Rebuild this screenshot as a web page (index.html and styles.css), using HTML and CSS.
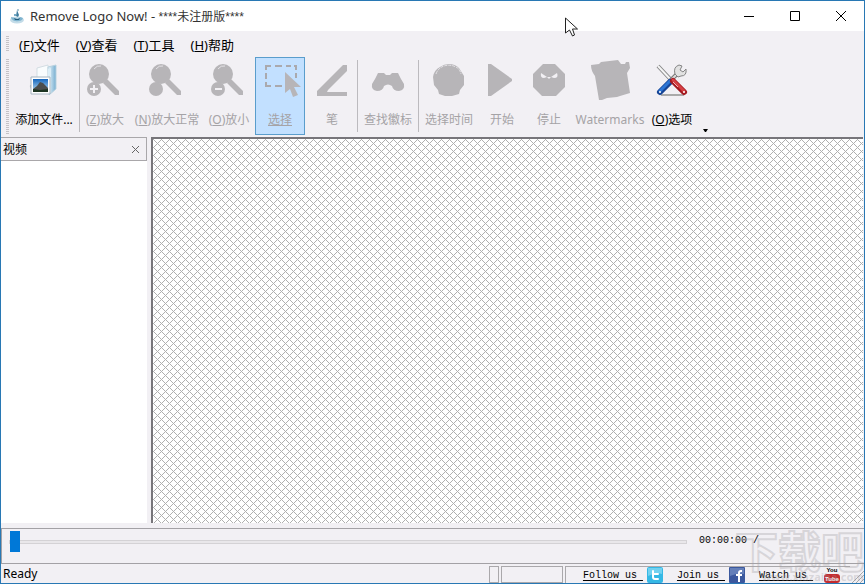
FILE: index.html
```html
<!DOCTYPE html>
<html lang="zh-CN">
  <head>
    <meta charset="UTF-8" />
    <meta name="viewport" content="width=device-width, initial-scale=1.0" />
    <title>Remove Logo Now!</title>
    <link rel="stylesheet" href="styles.css">
  </head>
  <body>
    <div class="window">
      <header class="titlebar">
        <svg class="app-icon" width="16" height="16" viewBox="0 0 16 16">
          <ellipse cx="8" cy="12" rx="7" ry="3.5" fill="#c3dce8" />
          <path d="M2 9c0 5 11 6 12 1l-3-1-2 2-3-1z" fill="#7fb4cf" />
          <path d="M5 10q3 2 6 0l-1 2H6z" fill="#235b7c" />
          <path d="M7 8l1-6 2 5-1 2z" fill="#3e7d9f" />
          <circle cx="9" cy="2" r="1" fill="#8fb5c7" />
          <circle cx="6" cy="7" r="1" fill="#4c91b5" />
        </svg>
        <h1>Remove Logo Now! - <span class="edition">****未注册版****</span></h1>
        <div class="window-buttons">
          <button aria-label="Minimize">
            <svg width="12" height="12"><path d="M1 6.500h10" /></svg>
          </button>
          <button aria-label="Maximize">
            <svg width="12" height="12"><path d="M1.500 1.500h9v9h-9z" /></svg>
          </button>
          <button aria-label="Close">
            <svg width="12" height="12"><path d="M1 1l10 10M11 1L1 11" /></svg>
          </button>
        </div>
      </header>

      <nav class="menubar">
        <span class="grip"></span>
        <button>(<u>F</u>)文件</button>
        <button>(<u>V</u>)查看</button>
        <button>(<u>T</u>)工具</button>
        <button>(<u>H</u>)帮助</button>
      </nav>

      <div class="toolbar">
        <span class="grip"></span>
        <button class="tool file">
          <svg width="32" height="32" viewBox="0 0 32 32">
            <defs>
              <linearGradient id="folder" x1="0" x2="1">
                <stop offset="0" stop-color="#e9f5fb" />
                <stop offset="1" stop-color="#75add0" />
              </linearGradient>
              <linearGradient id="sky" x2="0" y2="1">
                <stop offset="0" stop-color="#1667bd" />
                <stop offset="1" stop-color="#c7e5f5" />
              </linearGradient>
            </defs>
            <path d="M9 4l11-3v19H9z" fill="#f9fcfd" stroke="#d3dde3" />
            <path d="M20 3l8-2v24l-7 6z" fill="url(#folder)" stroke="#b8d2df" />
            <path d="M20 5l3-1v24l-3 3z" fill="#dceef7" />
            <path d="M2 21q-1 4 4 5v-5z" fill="#b5b8bd" />
            <path d="M3 13h19v17H3z" fill="#fff" stroke="#a7b6c1" />
            <path d="M5 15h15v13H5z" fill="url(#sky)" />
            <path d="M5 25l4-3 3-4 3 1 5 5v3H5z" fill="#4b4d4c" />
            <path d="M5 25l7 1 8-1v3H5z" fill="#1d3522" />
          </svg>
          <span>添加文件...</span>
        </button>
        <span class="divider"></span>
        <button class="tool zoom" disabled>
          <svg width="32" height="32" viewBox="0 0 32 32">
            <circle cx="12" cy="10" r="10" />
            <circle cx="7" cy="25" r="7" />
            <path d="M16 19l4-4 12 12v4h-4z" />
            <path d="M6 21h2v3h3v2H8v3H6v-3H3v-2h3z" class="cut" />
            <path d="M7 5q3-4 7-3" class="shine" />
          </svg>
          <span>(<u>Z</u>)放大</span>
        </button>
        <button class="tool wide zoom" disabled>
          <svg width="32" height="32" viewBox="0 0 32 32">
            <circle cx="12" cy="10" r="10" />
            <circle cx="7" cy="25" r="7" />
            <path d="M16 19l4-4 12 12v4h-4z" />
            <path d="M7 5q3-4 7-3" class="shine" />
          </svg>
          <span>(<u>N</u>)放大正常</span>
        </button>
        <button class="tool zoom" disabled>
          <svg width="32" height="32" viewBox="0 0 32 32">
            <circle cx="12" cy="10" r="10" />
            <circle cx="7" cy="25" r="7" />
            <path d="M16 19l4-4 12 12v4h-4z" />
            <path d="M4 24h7v2H4z" class="cut" />
            <path d="M7 5q3-4 7-3" class="shine" />
          </svg>
          <span>(<u>O</u>)放小</span>
        </button>
        <button class="tool selected" disabled>
          <svg width="36" height="32" viewBox="0 0 36 32">
            <path d="M1 6V2h5M10 2h7M21 2h5M29 2h2v4M1 9v6M1 18v4h5M10 22h7M31 9v5" class="dash" />
            <path d="M20 8l16 15h-7l4 8-5 2-3-8-5 4z" />
          </svg>
          <span><u>选择</u></span>
        </button>
        <button class="tool" disabled>
          <svg width="32" height="32" viewBox="0 0 32 32">
            <path d="M27 1l4 0v6L12 26l-1 2h20v4H1v-5z" />
          </svg>
          <span>笔</span>
        </button>
        <span class="divider"></span>
        <button class="tool medium" disabled>
          <svg width="32" height="32" viewBox="0 0 32 32">
            <path d="M6 9h6l2 2h4l2-2h6l3 6 3 5q1 6-5 7-6 0-7-5-4-3-8 0-1 5-7 5-6-1-5-7l3-5z" />
          </svg>
          <span>查找徽标</span>
        </button>
        <span class="divider"></span>
        <button class="tool medium" disabled>
          <svg width="32" height="32" viewBox="0 0 32 32">
            <path d="M16 0q6 0 10 4l5 8v9l-4 5-1 4-7 2h-7l-6-2-1-4-4-5-1-8q1-7 7-10 4-3 9-3z" />
            <path d="M3 10q2-6 8-8 6-2 12 1 4 2 5 7" class="shine" stroke-dasharray="3 1" />
          </svg>
          <span>选择时间</span>
        </button>
        <button class="tool slim" disabled>
          <svg width="32" height="32" viewBox="0 0 32 32"><path d="M2 0h3l21 15v2L5 32H2z" /></svg>
          <span>开始</span>
        </button>
        <button class="tool slim" disabled>
          <svg width="32" height="32" viewBox="0 0 32 32">
            <path d="M10 0h12l10 10v13l-9 9H9l-9-9V10z" />
            <path d="M8 9l6 4h4l6-4q2 5-3 5l-3-1-2 2-2-2-3 1q-4 0-3-5z" class="cut" />
          </svg>
          <span>停止</span>
        </button>
        <button class="tool wide sheet" disabled>
          <svg width="40" height="40" viewBox="0 0 40 40">
            <path d="M1 5l8-1 2-2 17-2 3 4h4l1-2h3l1 6-3 5 3 20-10 3-3 1-10 1-5 2H9L5 16q-4-5-4-11z" />
          </svg>
          <span>Watermarks</span>
        </button>
        <button class="tool">
          <svg width="32" height="32" viewBox="0 0 32 32">
            <path d="M5 31h23" stroke="#aaa" stroke-width="2" />
            <path d="M2 2l15 16" stroke="#858585" stroke-width="4" />
            <path d="M2 2l14 15" stroke="#f5f5f5" stroke-width="2" />
            <path d="M13 18l9-9" stroke="#777" stroke-width="4" />
            <path d="M13 18l9-9" stroke="#ddd" stroke-width="2" />
            <path d="M19 10q-2-7 4-9l3 1-2 4 3 2 3-3q1 7-5 7l-3 1z" fill="#e2e2e2" stroke="#858585" />
            <path d="M4 28l10-10" stroke="#164495" stroke-width="6" stroke-linecap="round" />
            <path d="M4 27l10-10" stroke="#2d76d5" stroke-width="3" stroke-linecap="round" />
            <path d="M17 17l11 11" stroke="#a31920" stroke-width="6" stroke-linecap="round" />
            <path d="M17 16l11 11" stroke="#d53f43" stroke-width="3" stroke-linecap="round" />
            <path d="M17 18l5 5" stroke="#f1b4b4" />
            <circle cx="4" cy="28" r="1" fill="#fff" />
            <circle cx="28" cy="28" r="1" fill="#fff" />
          </svg>
          <span>(<u>O</u>)选项</span>
        </button>
        <button class="overflow" aria-label="More">
          <svg width="5" height="3"><path d="M0 0h5L3 3H2z" /></svg>
        </button>
      </div>

      <main class="workspace">
        <aside class="videos">
          <div class="panel-title">
            <h2>视频</h2>
            <button aria-label="Close panel">
              <svg width="9" height="9"><path d="M1 1l7 7M8 1L1 8" /></svg>
            </button>
          </div>
          <div class="video-list"></div>
        </aside>
        <section class="preview">
          <svg width="100%" height="100%">
            <pattern id="hatch" width="8" height="8" patternUnits="userSpaceOnUse">
              <path d="M0 0h1v1H0zM1 1h1v1H1zM2 2h1v1H2zM3 3h1v1H3zM4 4h1v1H4zM5 5h1v1H5zM6 6h1v1H6zM7 7h1v1H7zM1 7h1v1H1zM2 6h1v1H2zM3 5h1v1H3zM5 3h1v1H5zM6 2h1v1H6zM7 1h1v1H7z" />
            </pattern>
            <rect width="100%" height="100%" fill="url(#hatch)" />
          </svg>
        </section>
      </main>

      <div class="seekbar">
        <input type="range" min="0" max="100" value="0" aria-label="Position" />
        <span class="time">00:00:00 /</span>
      </div>

      <footer class="statusbar">
        <span class="ready">Ready</span>
        <span class="pane tiny"></span>
        <span class="pane small"></span>
        <div class="pane links">
          <a href="#">Follow us&nbsp;</a>
          <svg width="16" height="16" viewBox="0 0 16 16">
            <rect width="16" height="16" rx="2" fill="#35b8e5" />
            <path d="M1 1h14v6q-6-2-14 2z" fill="#72d1f0" />
            <path d="M6 4v6q0 2 2 2h3M6 7h5" fill="none" stroke="#fff" stroke-width="2" stroke-linecap="round" />
          </svg>
          <a href="#">Join us&nbsp;</a>
          <svg width="16" height="16" viewBox="0 0 16 16">
            <rect width="16" height="16" rx="1" fill="#3b589e" />
            <path d="M1 1h14v6q-7-1-14 2z" fill="#647fb9" />
            <path d="M13 4h-1q-2 0-2 2v9M7 8h6" fill="none" stroke="#fff" stroke-width="2" />
          </svg>
          <a href="#" class="watch">Watch us&nbsp;</a>
          <svg width="16" height="16" viewBox="0 0 16 16">
            <rect y="7" width="16" height="9" rx="3" fill="#c52c2f" />
            <text x="8" y="5" class="you">You</text>
            <text x="8" y="14" class="tube">Tube</text>
          </svg>
        </div>
        <svg class="resize" width="12" height="12"><path d="M0 12L12 0M4 12l8-8M8 12l4-4" /></svg>
      </footer>

      <div class="watermark">
        <span class="mark">下载吧</span>
        <span class="site">www.xiazaiba.com</span>
      </div>
      <svg class="cursor" width="13" height="20" viewBox="0 0 13 20">
        <path d="M.5 1v15l4-3 3 6 2-1-2-6h5z" />
      </svg>
    </div>
  </body>
</html>
```

FILE: styles.css
```css
* {
  box-sizing: border-box;
}

body {
  margin: 0;
  font-family: "Noto Sans", "Noto Sans CJK SC", sans-serif;
  font-size: 12px;
  color: #000;
}

button {
  padding: 0;
  border: none;
  background: none;
  font: inherit;
  color: inherit;
  white-space: nowrap;
}

svg {
  display: block;
  flex-shrink: 0;
}

.window {
  position: relative;
  display: flex;
  flex-direction: column;
  height: 100vh;
  border: 1px solid #2878b4;
  background-color: #f2f0f4;
  overflow: hidden;
}

.titlebar {
  display: flex;
  align-items: center;
  height: 30px;
  padding-left: 8px;
  background-color: #fff;
}

.titlebar h1 {
  flex: 1;
  margin: 0 0 0 5px;
  font-size: 13px;
  font-weight: normal;
  line-height: 18px;
  color: #333;
}

.edition {
  font-family: "Liberation Sans", "Noto Sans CJK SC", sans-serif;
  font-size: 12px;
}

.window-buttons {
  display: flex;
}

.window-buttons button {
  display: flex;
  align-items: center;
  justify-content: center;
  width: 46px;
  height: 30px;
}

.window-buttons path {
  fill: none;
  stroke: #000;
}

.grip {
  width: 3px;
  margin-left: 5px;
  background: repeating-linear-gradient(#c4c2c6 0 1px, transparent 1px 2px);
}

.menubar {
  display: flex;
  align-items: center;
  height: 26px;
  gap: 16px;
  font-size: 13px;
}

.menubar .grip {
  height: 16px;
  margin-right: -6px;
}

.toolbar {
  display: flex;
  gap: 1px;
  height: 80px;
  padding-bottom: 2px;
}

.toolbar .grip {
  margin-top: 2px;
}

.tool {
  display: flex;
  flex-direction: column;
  align-items: center;
  flex-shrink: 0;
  width: 48px;
  padding-top: 6px;
  border: 1px solid transparent;
}

.tool svg {
  overflow: visible;
}

.tool span {
  margin-top: auto;
  padding-bottom: 5px;
  line-height: 18px;
}

.tool.slim {
  width: 46px;
}

.tool.medium {
  width: 58px;
}

.tool.file {
  width: 68px;
}

.tool.wide {
  width: 74px;
}

.tool:disabled {
  color: #a5a3a6;
  fill: #b7b5b8;
}

.tool.zoom svg {
  margin-right: 4px;
}

.tool.sheet {
  padding-top: 2px;
}

.tool.selected {
  width: 50px;
  margin: 0 2px 0 1px;
  border-color: #5a9dcc;
  background-color: #c2e0ff;
}

.tool.selected svg {
  margin-left: 6px;
}

.cut {
  fill: #f2f0f4;
}

.shine {
  fill: none;
  stroke: #e5e3e7;
}

.dash {
  fill: none;
  stroke: #aaa9ad;
  stroke-width: 2;
}

.divider {
  width: 1px;
  flex-shrink: 0;
  margin: 3px 0;
  background-color: #bcbabe;
}

.overflow {
  align-self: flex-end;
  padding: 3px 6px;
}

.workspace {
  flex: 1;
  display: flex;
  min-height: 0;
  padding-right: 1px;
}

.videos {
  display: flex;
  flex-direction: column;
  width: 146px;
  margin-right: 4px;
}

.panel-title {
  display: flex;
  align-items: center;
  justify-content: space-between;
  height: 24px;
  padding: 0 6px 0 2px;
  border: 1px solid #a9a7aa;
  border-left: none;
}

.panel-title h2 {
  margin: 0;
  font-size: 12px;
  font-weight: normal;
}

.panel-title path {
  fill: none;
  stroke: #666;
}

.video-list {
  flex: 1;
  background-color: #fff;
}

.preview {
  flex: 1;
  min-width: 0;
  border: 2px solid #77757a;
  border-width: 2px 0 0 2px;
  background-color: #fff;
}

#hatch path {
  fill: #b0b0b0;
  shape-rendering: crispEdges;
}

.seekbar {
  display: flex;
  align-items: flex-start;
  height: 36px;
  margin-top: 5px;
  padding: 2px 105px 0 7px;
  border: 1px solid #a3a1a5;
  border-right: none;
}

.seekbar input {
  flex: 1;
  height: 21px;
  margin: 0;
  appearance: none;
  background: none;
}

.seekbar input::-webkit-slider-runnable-track {
  height: 4px;
  border: 1px solid #d4d2d5;
  background-color: #e9e7ea;
}

.seekbar input::-webkit-slider-thumb {
  appearance: none;
  width: 10px;
  height: 21px;
  margin-top: -10px;
  background-color: #0078d7;
}

.time {
  margin-left: 12px;
  font-family: "Liberation Mono", monospace;
  font-size: 10px;
  line-height: 20px;
}

.statusbar {
  display: flex;
  align-items: flex-end;
  height: 19px;
  gap: 2px;
}

.ready {
  flex: 1;
  padding-left: 2px;
  line-height: 18px;
}

.pane {
  height: 17px;
  border: 1px solid #aaa8ab;
}

.tiny {
  width: 10px;
}

.small {
  width: 62px;
}

.links {
  display: flex;
  align-items: center;
  gap: 4px;
  padding-left: 17px;
  border-right: none;
  border-bottom: none;
}

.links svg {
  margin-right: 10px;
}

.links a {
  font-family: "Liberation Mono", monospace;
  font-size: 10px;
  color: #000;
  text-underline-offset: 2px;
}

.links .watch {
  margin-right: 7px;
}

.you,
.tube {
  font-family: "Liberation Sans", sans-serif;
  font-size: 6px;
  font-weight: bold;
  text-anchor: middle;
}

.tube {
  fill: #fff;
}

.resize {
  stroke: #aaa;
}

/* overlays */
.watermark {
  position: absolute;
  right: 0;
  bottom: 0;
  display: flex;
  flex-direction: column;
  align-items: flex-end;
  pointer-events: none;
}

.mark {
  font-family: "Noto Sans CJK SC", sans-serif;
  font-size: 43px;
  font-weight: bold;
  line-height: 44px;
  color: transparent;
  -webkit-text-stroke: 2px rgba(165, 162, 167, 0.35);
}

.site {
  font-size: 11px;
  font-weight: bold;
  line-height: 12px;
  color: rgba(150, 148, 152, 0.3);
}

.cursor {
  position: absolute;
  left: 564px;
  top: 16px;
  fill: #fff;
  stroke: #222;
}
```
